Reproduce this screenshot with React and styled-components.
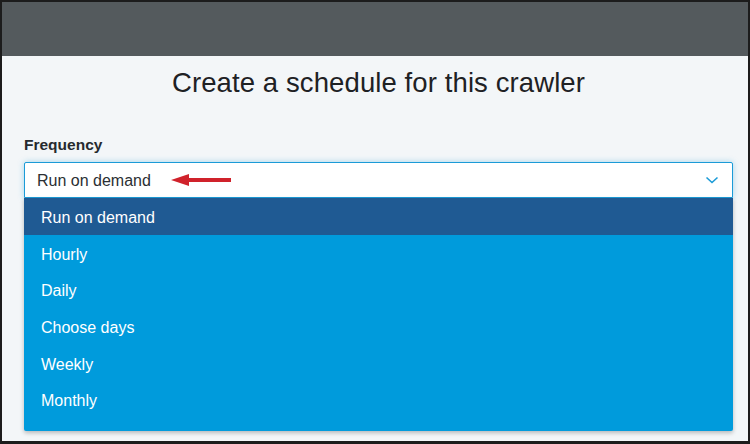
import styled, { createGlobalStyle } from "styled-components";

const GlobalStyle = createGlobalStyle`
  html, body {
    margin: 0;
    padding: 0;
    background: #ffffff;
  }
  body {
    font-family: "Liberation Sans", Arial, sans-serif;
  }
`;

const Frame = styled.div`
  box-sizing: border-box;
  width: 750px;
  height: 444px;
  border: 2px solid #1c1c1c;
  border-bottom-width: 3px;
  background: #f3f6f8;
  display: flex;
  flex-direction: column;
  overflow: hidden;
`;

const TopBar = styled.div`
  height: 54px;
  flex-shrink: 0;
  background: #545a5d;
`;

const Content = styled.div`
  display: flex;
  flex-direction: column;
  padding: 0 15px 0 22px;
`;

const Title = styled.h1`
  margin: 11px 0 0;
  text-align: center;
  font-size: 27.5px;
  font-weight: 400;
  line-height: 32px;
  color: #1e2124;
  letter-spacing: 0.1px;
`;

const Label = styled.label`
  margin-top: 37px;
  font-size: 15.5px;
  font-weight: 700;
  line-height: 18px;
  color: #262a2e;
`;

const Field = styled.div`
  margin-top: 8px;
  display: flex;
  flex-direction: column;
`;

const SelectBox = styled.div`
  box-sizing: border-box;
  height: 36px;
  display: flex;
  align-items: center;
  padding: 0 12px 0 12px;
  background: #ffffff;
  border: 1px solid #1b9bd7;
  border-radius: 2px 2px 0 0;
  box-shadow: 0 0 6px rgba(27, 155, 215, 0.35);
  font-size: 16px;
  color: #2b2f33;
`;

const Value = styled.span`
  line-height: 20px;
  padding-top: 1px;
`;

const Arrow = styled.svg`
  margin-left: 20px;
  display: block;
`;

const Chevron = styled.svg`
  margin-left: auto;
  margin-right: 1px;
  display: block;
`;

const Menu = styled.ul`
  list-style: none;
  margin: 0;
  padding: 0 0 13px;
  background: #009bdc;
  border-radius: 0 0 2px 2px;
  box-shadow: 0 2px 4px rgba(0, 0, 0, 0.25);
`;

const Option = styled.li`
  height: 36.6px;
  display: flex;
  align-items: center;
  padding-left: 17px;
  padding-top: 4px;
  box-sizing: border-box;
  font-size: 16px;
  color: #ffffff;
  background: ${props => (props.selected ? "#1f5a93" : "transparent")};
`;

const options = [
  "Run on demand",
  "Hourly",
  "Daily",
  "Choose days",
  "Weekly",
  "Monthly",
];

const App = () => {
  const current = "Run on demand";

  return (
    <>
      <GlobalStyle />
      <Frame>
        <TopBar />
        <Content>
          <Title>Create a schedule for this crawler</Title>
          <Label>Frequency</Label>
          <Field>
            <SelectBox>
              <Value>{current}</Value>
              <Arrow width="60" height="14" viewBox="0 0 60 14">
                <polygon points="0,7 18,1 18,13" fill="#d0222b" />
                <rect x="16" y="5" width="44" height="4" fill="#d0222b" />
              </Arrow>
              <Chevron width="14" height="8" viewBox="0 0 14 8">
                <polyline
                  points="1.5,1.5 7,6.5 12.5,1.5"
                  fill="none"
                  stroke="#1b9bd7"
                  strokeWidth="1.6"
                />
              </Chevron>
            </SelectBox>
            <Menu>
              {options.map(option => (
                <Option key={option} selected={option === current}>
                  {option}
                </Option>
              ))}
            </Menu>
          </Field>
        </Content>
      </Frame>
    </>
  );
};

export default App;
